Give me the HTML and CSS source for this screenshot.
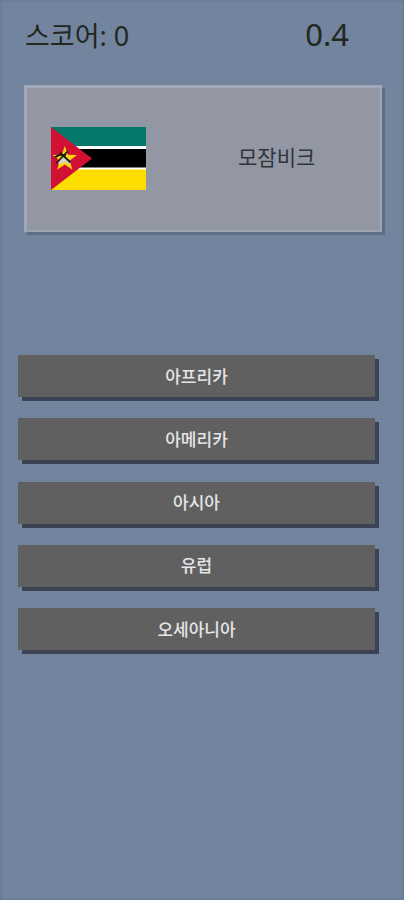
FILE: index.html
```html
<!DOCTYPE html>
<html lang="ko">
	<head>
		<meta charset="UTF-8">
		<title>국기 퀴즈</title>
		<link rel="stylesheet" href="styles.css">
	</head>
	<body>
		<div id="game">
			<div class="top">
				<span class="score">스코어: 0</span>
				<span class="time">0.4</span>
			</div>
			<div class="card">
				<svg class="flag" viewBox="0 0 95 63">
					<rect width="95" height="63" fill="#fff"/>
					<rect width="95" height="19" fill="#04796b"/>
					<rect y="22" width="95" height="18.5" fill="#000"/>
					<rect y="42.5" width="95" height="20.5" fill="#fddc00"/>
					<path d="M0 0L41 31.5L0 63z" fill="#d21034"/>
					<path d="M13.8 19L16.8 27.8L26 28L18.8 33.6L21.4 42.8L13.8 37.6L6.2 42.8L8.8 33.6L1.6 28L10.8 27.8z" fill="#fcd50c"/>
					<path d="M7 36L13 28.5L19.5 34L19 37.5L13.5 35L8 37.5z" fill="#d4d4ce"/>
					<path d="M5 36.5L16.5 24.5M9 25.5L19.5 35.5M4 30.5Q8 26.5 15 28" fill="none" stroke="#1c1a14" stroke-width="1.8"/>
				</svg>
				<span class="country">모잠비크</span>
			</div>
			<div class="list">
				<a href="javascript:;">아프리카</a>
				<a href="javascript:;">아메리카</a>
				<a href="javascript:;">아시아</a>
				<a href="javascript:;">유럽</a>
				<a href="javascript:;">오세아니아</a>
			</div>
		</div>
	</body>
</html>
```
FILE: styles.css
```css
*{
    margin: 0;
    padding: 0;
    box-sizing: border-box;
}
body{
    background: #73849e;
    font-family: "Noto Sans CJK KR", sans-serif;
}
#game{
    height: 900px;
    overflow: hidden;
    box-shadow: inset 0 0 3px #5c6e8f;
}
.top{
    display: flex;
    justify-content: space-between;
    align-items: center;
    height: 70px;
    padding: 0 55px 2px 25px;
    color: #222820;
}
.score{
    padding-top: 3px;
    font-family: "Noto Sans", "Noto Sans CJK KR", sans-serif;
    font-size: 27px;
    line-height: 40px;
}
.time{
    font-family: "Noto Sans", sans-serif;
    font-size: 31px;
}
.card{
    display: flex;
    align-items: center;
    width: 358px;
    height: 147px;
    margin: 15px 0 0 24px;
    padding: 0 0 2px 24px;
    background: #9397a4;
    border: 3px solid #a0a8ba;
    border-right: 2px solid #9fa6b1;
    border-bottom: 2px solid #9ca4b1;
    box-shadow: 3px 3px 0 #5e6d86;
}
.flag{
    width: 95px;
    height: 63px;
}
.country{
    margin-left: 92px;
    padding-bottom: 4px;
    font-size: 21px;
    color: #30343c;
}
.list{
    display: grid;
    grid-auto-rows: 42px;
    row-gap: 21.3px;
    margin: 123px 29px 0 18px;
}
.list a{
    display: flex;
    justify-content: center;
    align-items: center;
    padding-bottom: 2px;
    font-size: 17px;
    font-weight: 500;
    color: #e6e6e6;
    text-decoration: none;
    background: #606060;
    box-shadow: 4px 4px 0 #3a4254;
}
```
